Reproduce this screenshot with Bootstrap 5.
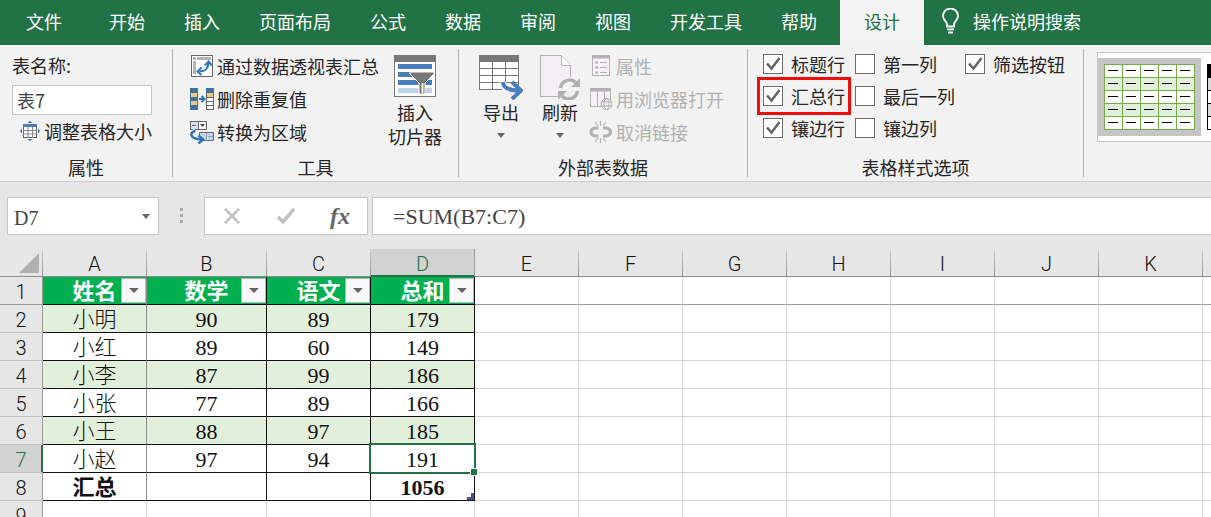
<!DOCTYPE html>
<html lang="zh-CN">
<head>
<meta charset="utf-8">
<meta name="viewport" content="width=device-width, initial-scale=1">
<title>表格工具 - 设计</title>
<link href="https://cdn.jsdelivr.net/npm/bootstrap@5.3.0/dist/css/bootstrap.min.css" rel="stylesheet">
<style>
  :root { --xl-green: #217346; --ink: #262626; --line: #d4d4d4; }
  body { font: 18px/24px "Noto Sans CJK SC", sans-serif; color: var(--ink); background: #e6e6e6; height: 100vh; overflow: hidden; }
  button { font: inherit; color: inherit; background: none; border: 0; padding: 0; }
  svg { flex: none; display: block; }

  .tabs { background: var(--xl-green); height: 45px; }
  .tabs a { color: #fff; text-decoration: none; padding: 0 20px 4px 19px; white-space: nowrap; display: flex; align-items: center; }
  .tabs a.file-tab { padding-left: 26px; padding-right: 28px; }
  .tabs a.on { background: #f3f3f3; color: var(--xl-green); padding-left: 24px; padding-right: 24px; margin-left: 3px; }
  .tabs a.tell { padding-left: 16px; padding-bottom: 3px; gap: 12px; }

  .ribbon { background: #f2f2f2; border-bottom: 1px solid #cfcfcf; padding: 4px 0; }
  .group { flex: none; border-right: 1px solid #b1b1b1; white-space: nowrap; }
  .group-body { height: 108px; }
  .group-name { line-height: 20px; text-align: center; }
  .g-props { width: 173px; }
  .g-tools { width: 286px; }
  .g-ext { width: 289px; }
  .g-opts { width: 336px; }
  .tool-row { height: 33px; display: flex; align-items: center; gap: 3px; }
  .tool-row:disabled { color: #b1b1b1; }
  .big-btn { display: flex; flex-direction: column; align-items: center; line-height: 24px; padding-top: 6px; }
  .g-tools .big-btn svg { margin-bottom: 3px; }
  .tri { border: 4px solid transparent; border-top: 5px solid #666; border-bottom: 0; }
  .big-btn .tri { margin-top: 9px; }
  .name-input { width: 140px; height: 30px; border: 1px solid #c6c6c6; background: #fff; padding: 0 4px; color: #444; }

  .opts { display: grid; grid-template-columns: 92px 110px auto; gap: 6px 0; padding: 2px 0 0 15px; align-content: start; justify-items: start; }
  .opt { display: flex; align-items: center; gap: 8px; height: 26px; }
  .opt input { appearance: none; width: 20px; height: 20px; margin: 0; border: 1px solid #6d6d6d; background: #fff; }
  .opt input:checked { background: #fff url("data:image/svg+xml,%3Csvg xmlns='http://www.w3.org/2000/svg' viewBox='0 0 18 18'%3E%3Cpath d='M3 8.500l4.500 5 8-10.500' fill='none' stroke='%23666' stroke-width='2.600'/%3E%3C/svg%3E"); }
  .opt.marked { outline: 3px solid #f00d0d; outline-offset: 3px; }

  .gallery { margin: 3px 0 0 13px; height: 90px; border: 1px solid #c6c6c6; border-right: 0; background: #fff; overflow: hidden; }
  .style-item { flex: none; margin-top: 5px; height: 78px; width: 103px; }
  .style-item.on { background: #c5c5c5; }

  .fbar { padding: 15px 0 14px; }
  .fbox { background: #fff; border: 1px solid #c6c6c6; height: 38px; }
  .serif { font-family: "Liberation Serif", "Noto Sans CJK SC", serif; font-size: 22px; }
  .name-box { width: 152px; margin-left: 7px; }
  .name-box input { font-size: 20px; width: 110px; color: #444; padding: 3px 0 0 6px; }
  .fbox input { border: 0; background: none; outline: 0; }
  .formula { color: #444; padding: 2px 0 0 20px; }
  .fx-tools { width: 164px; margin-left: 20px; padding: 0 17px; }
  .fx-sign { font: italic bold 24px/30px "Liberation Serif", serif; color: #666; }

  .sheet { width: 100%; table-layout: fixed; border-collapse: separate; border-spacing: 0; background: #fff; font-weight: 300; }
  .sheet th, .sheet td { height: 28px; line-height: 24px; padding: 3px 0 0; text-align: center; border: 0 solid var(--line); border-width: 0 1px 1px 0; position: relative; font-size: 22px; white-space: nowrap; color: #111; }
  .sheet td, .sheet .field { font-family: "Liberation Serif", "Noto Sans CJK SC", serif; }
  .sheet thead th, .sheet .rownum { font-family: Roboto, "Noto Sans CJK SC", sans-serif; font-size: 20px; font-weight: 300; background: #e6e6e6; }
  .sheet thead th { border-color: #999; border-image: linear-gradient(#d0d0d0, #8c8c8c) 1; }
  .sheet .rownum { border-right-color: #999; border-bottom-color: #c4c4c4; }
  .sheet thead .cur { background: #d2d2d2; color: var(--xl-green); border-image: none; border-bottom-color: var(--xl-green); box-shadow: inset 0 -1px var(--xl-green); }
  .sheet .rownum.cur { background: #d2d2d2; color: var(--xl-green); box-shadow: inset -1px 0 var(--xl-green); border-right-color: var(--xl-green); }
  .sheet .frozen > * { border-bottom-color: #999; }
  .sheet .field { background: #00b050; color: #fff; font-weight: 700; }
  .sheet .in { border-color: #111; }
  .sheet .in.first { border-right-color: #8c8c8c; }
  .sheet .band .in { background: #e2efda; }
  .sheet .total .in { font-weight: 700; }
  .drop { position: absolute; right: 0; top: 1px; width: 25px; height: 25px; background: #f8f8fa; border: 1px solid #b5b5c0; display: flex; align-items: center; justify-content: center; }
  .drop .tri { border-width: 5px 5px 0; }
  .picked::after { content: ""; position: absolute; z-index: 2; inset: -2px; border: 2px solid var(--xl-green); }
  .handle { position: absolute; z-index: 3; right: -3px; bottom: -3px; width: 6px; height: 6px; background: var(--xl-green); outline: 1px solid #fff; }
  .resize { position: absolute; right: 0; bottom: 0; }
  .corner { position: absolute; right: 3px; bottom: 3px; }
</style>
</head>
<body>
<nav class="tabs d-flex">
  <a class="file-tab" href="#">文件</a><a href="#">开始</a><a href="#">插入</a><a href="#">页面布局</a><a href="#">公式</a><a href="#">数据</a><a href="#">审阅</a><a href="#">视图</a><a href="#">开发工具</a><a href="#">帮助</a><a class="on" href="#" aria-current="page">设计</a>
  <a class="tell" href="#"><svg width="21" height="26" viewBox="0 0 21 26" fill="none" stroke="#fff" stroke-width="1.800"><path d="M7 18.500v-2.500c0-2-4-4-4-8a7.500 7.500 0 0 1 15 0c0 4-4 6-4 8v2.500z"/><path d="M7 21.300h7M8 24.500h5"/></svg>操作说明搜索</a>
</nav>

<section class="ribbon d-flex overflow-hidden">
  <div class="group g-props">
    <div class="group-body d-flex flex-column align-items-start ps-2">
      <label for="tname" class="ms-1 pt-1 mb-2">表名称:</label>
      <input id="tname" class="name-input ms-1 mb-1" value="表7">
      <button class="d-flex align-items-center ms-2 ps-1" type="button">
        <svg width="20" height="20" viewBox="0 0 20 20" class="me-1"><rect x="3.500" y="3.500" width="13" height="13" fill="#fff" stroke="#666"/><path d="M3 3h14v3H3z" fill="#4a7ebb"/><path d="M8 6v11M12.500 6v11M3 9.500h14M3 13h14" stroke="#888"/><path d="M7.500 2L10 0l2.500 2zM7.500 18l2.500 2 2.500-2zM2 7.500L0 10l2 2.500zM18 7.500l2 2.500-2 2.500z" fill="#2e75b6"/></svg>
        调整表格大小</button>
    </div>
    <div class="group-name">属性</div>
  </div>

  <div class="group g-tools">
    <div class="group-body d-flex justify-content-between ps-3 pe-3">
      <div class="d-flex flex-column align-items-start">
        <button class="tool-row" type="button"><svg width="25" height="24" viewBox="0 0 25 24"><rect x="2.500" y="1.500" width="21" height="21" fill="#fff" stroke="#666"/><path d="M4 3h3v3H4zM8 3h14v3H8zM4 7h3v13H4z" fill="#b3b3b3"/><path d="M10.500 17.500q8.500 0 9-8.500" fill="none" stroke="#2e75b6" stroke-width="2"/><path d="M16 11.500l3.500-4 3.500 4M12.500 13.500l-4 4 4 3.500" fill="none" stroke="#2e75b6" stroke-width="2"/></svg>通过数据透视表汇总</button>
        <button class="tool-row" type="button"><svg width="25" height="24" viewBox="0 0 25 24"><path d="M1 1h8v22H1z" fill="#41719c"/><path d="M2 6h6v4H2zM2 14h6v4H2z" fill="#f0c987"/><path d="M10 12h5M12.500 9l3 3-3 3" fill="none" stroke="#2e75b6" stroke-width="2"/><path d="M17 1h8v22h-8z" fill="#666"/><path d="M17 1h8v5h-8z" fill="#41719c"/><path d="M18 6h6v4h-6z" fill="#f0c987"/><path d="M18 11h6v3h-6zM18 15h6v3h-6zM18 19h6v3h-6z" fill="#fff"/></svg>删除重复值</button>
        <button class="tool-row" type="button"><svg width="25" height="24" viewBox="0 0 25 24"><rect x="1.500" y="1.500" width="16" height="8" fill="#fff" stroke="#666"/><path d="M2 2h7v7H2z" fill="#d5e2f0"/><path d="M9.500 1v9M3 5.500h4" stroke="#666"/><path d="M11 4h5l-2.500 3z" fill="#444"/><path d="M10.500 12.500h14v8h-14z" fill="#c5d6eb" stroke="#666"/><path d="M17.500 13v8M19 16.500h5" stroke="#8aa"/><path d="M6.500 11.500q-5 1-4 4t10 4" fill="none" stroke="#f2f2f2" stroke-width="5"/><path d="M6.500 11q-5 1-4 4.500t11 4" fill="none" stroke="#2e75b6" stroke-width="2.500"/><path d="M9.500 15.500l4.500 4-4.500 4" fill="none" stroke="#2e75b6" stroke-width="2.500"/></svg>转换为区域</button>
      </div>
      <button class="big-btn flex-shrink-0" type="button">
        <svg width="42" height="42" viewBox="0 0 42 42"><rect x=".5" y=".5" width="41" height="41" fill="#fff" stroke="#777"/><path d="M0 0h42v7H0z" fill="#777"/><path d="M4 9h34v5H4zM4 17h34v5H4zM4 25h34v5H4z" fill="#4a7ebb"/><path d="M4 33h34v5H4z" fill="#c0d1ea"/><path d="M16 17h24v2l-9 9V39h-6V28L16 19z" fill="#777" stroke="#fff"/><path d="M28.500 28v10" stroke="#f4f4f4" stroke-width="2"/></svg>
        <span>插入</span><span>切片器</span></button>
    </div>
    <div class="group-name">工具</div>
  </div>

  <div class="group g-ext">
    <div class="group-body d-flex ps-3">
      <button class="big-btn ms-1 me-3" type="button">
        <svg width="44" height="45" viewBox="0 0 44 45"><rect x=".5" y=".5" width="39" height="34" fill="#fff" stroke="#777"/><path d="M0 0h40v7H0z" fill="#777"/><path d="M13.500 7v27M26.500 7v27M0 13.500h40M0 20.500h40M0 27.500h40" stroke="#777"/><path d="M23.500 27q1 9 15 9" fill="none" stroke="#f2f2f2" stroke-width="7"/><path d="M24 27q0 8.500 17 8.500" fill="none" stroke="#4a7ebb" stroke-width="4"/><path d="M33 27l9 8.500-9 8.500" fill="none" stroke="#4a7ebb" stroke-width="4"/></svg>
        <span>导出</span><span class="tri"></span></button>
      <button class="big-btn me-2" type="button">
        <svg width="42" height="45" viewBox="0 0 42 45"><path d="M1.500.5h21l9 10v31h-30z" fill="#f3eff5" stroke="#b1b1b1"/><path d="M22.500.5v10h9" fill="#fff" stroke="#b1b1b1"/><circle cx="30" cy="34" r="12" fill="#f2f2f2"/><path d="M21.500 33a9 9 0 0 1 15.500-5M38.500 36a9 9 0 0 1-15.500 5" fill="none" stroke="#b1b1b1" stroke-width="3.500"/><path d="M41 23v9h-9zM19 45v-9h9z" fill="#b1b1b1"/></svg>
        <span>刷新</span><span class="tri"></span></button>
      <div class="d-flex flex-column align-items-start">
        <button class="tool-row" type="button" disabled><svg width="24" height="24" viewBox="0 0 24 24" stroke="#b1b1b1"><rect x="3.500" y="1.500" width="17" height="20" fill="#f5f1f6"/><path d="M3 3h18" stroke-width="3"/><path d="M11 8.500h7M11 13.500h7M11 18.500h7"/><path d="M6 8.500h3M6 13.500h3M6 18.500h3" stroke-width="2"/></svg>属性</button>
        <button class="tool-row" type="button" disabled><svg width="24" height="24" viewBox="0 0 24 24" fill="none" stroke="#b1b1b1"><rect x="1.500" y="1.500" width="20" height="18" fill="#f5f1f6"/><path d="M1 3h21" stroke-width="3"/><path d="M8.500 4v15M15.500 4v10"/><circle cx="17.500" cy="17" r="5.500" fill="#f2f2f2"/><ellipse cx="17.500" cy="17" rx="2.500" ry="5.500"/><path d="M12 15h11M12 19h11"/></svg>用浏览器打开</button>
        <button class="tool-row" type="button" disabled><svg width="24" height="24" viewBox="0 0 24 24" fill="none" stroke="#b1b1b1"><path d="M9.500 8H6q-4 1-4 4t4 4h3.500M14 8h3.500q4 1 4 4t-4 4H14" stroke-width="3"/><path d="M11.500 1v5M6 2l3 4M17 2l-3 4M11.500 18v5M6 22l3-4M17 22l-3-4" stroke-width="1.200"/></svg>取消链接</button>
      </div>
    </div>
    <div class="group-name">外部表数据</div>
  </div>

  <div class="group g-opts">
    <div class="group-body opts">
      <label class="opt"><input type="checkbox" checked>标题行</label>
      <label class="opt"><input type="checkbox">第一列</label>
      <label class="opt"><input type="checkbox" checked>筛选按钮</label>
      <label class="opt marked"><input type="checkbox" checked>汇总行</label>
      <label class="opt"><input type="checkbox">最后一列</label><span></span>
      <label class="opt"><input type="checkbox" checked>镶边行</label>
      <label class="opt"><input type="checkbox">镶边列</label>
    </div>
    <div class="group-name">表格样式选项</div>
  </div>

  <div class="gallery d-flex flex-grow-1">
    <button class="style-item on" type="button" aria-label="浅绿色表格样式">
      <svg width="103" height="78" viewBox="0 0 103 78"><path d="M6 6h91v66H6z" fill="#fff"/><path d="M6 19h91v13H6zM6 45h91v13H6z" fill="#e2efda"/><path d="M6.500 6v66M24.500 6v66M42.500 6v66M60.500 6v66M78.500 6v66M96.500 6v66M6 6.500h91M6 19.500h91M6 32.500h91M6 45.500h91M6 58.500h91M6 71.500h91" stroke="#70ad47"/><path d="M10 12.500h88M10 25.500h88M10 38.500h88M10 51.500h88M10 64.500h88" stroke="#000" stroke-dasharray="10 8"/></svg></button>
    <button class="style-item" type="button" aria-label="黑色表格样式">
      <svg width="103" height="78" viewBox="0 0 103 78"><path d="M6 6h91v66H6z" fill="#fff"/><path d="M6 6h91v13H6z"/><path d="M6 19h91v13H6zM6 45h91v13H6z" fill="#d9d9d9"/><path d="M6.500 6v66M24.500 6v66M42.500 6v66M60.500 6v66M78.500 6v66M96.500 6v66M6 19.500h91M6 32.500h91M6 45.500h91M6 58.500h91M6 71.500h91" stroke="#000"/></svg></button>
  </div>
</section>

<section class="fbar d-flex align-items-center">
  <div class="fbox name-box d-flex align-items-center justify-content-between pe-2"><input class="serif" aria-label="名称框" value="D7"><span class="tri"></span></div>
  <svg class="ms-3 ps-1" width="9" height="16" viewBox="0 0 5 16"><path d="M1 0h3v3H1zM1 6h3v3H1zM1 12h3v3H1z" fill="#aaa"/></svg>
  <div class="fbox fx-tools d-flex align-items-center justify-content-between">
    <button type="button" aria-label="取消"><svg width="20" height="20" viewBox="0 0 20 20"><path d="M3 3l14 14M17 3L3 17" stroke="#c0c0c0" stroke-width="2.500"/></svg></button>
    <button type="button" aria-label="输入"><svg width="20" height="20" viewBox="0 0 20 20"><path d="M2 11l5 5L18 3" fill="none" stroke="#c0c0c0" stroke-width="3.500"/></svg></button>
    <button type="button" class="fx-sign" aria-label="插入函数">fx</button>
  </div>
  <div class="fbox flex-grow-1 ms-1 border-end-0"><input class="formula serif w-100 h-100" aria-label="编辑栏" value="=SUM(B7:C7)"></div>
</section>

<table class="sheet">
  <colgroup><col style="width:43px"><col style="width:104px"><col style="width:120px"><col style="width:104px"><col style="width:104px"><col style="width:104px"><col style="width:104px"><col style="width:104px"><col style="width:104px"><col style="width:104px"><col style="width:104px"><col style="width:104px"><col></colgroup>
  <thead><tr><th><svg class="corner" width="20" height="20" viewBox="0 0 20 20"><path d="M20 0v20H0z" fill="#b1b1b1"/></svg></th><th>A</th><th>B</th><th>C</th><th class="cur">D</th><th>E</th><th>F</th><th>G</th><th>H</th><th>I</th><th>J</th><th>K</th><th class="border-end-0"></th></tr></thead>
  <tbody id="rows"></tbody>
</table>

<script>
  const data = [
    ['姓名', '数学', '语文', '总和'],
    ['小明', 90, 89, 179], ['小红', 89, 60, 149], ['小李', 87, 99, 186],
    ['小张', 77, 89, 166], ['小王', 88, 97, 185], ['小赵', 97, 94, 191],
    ['汇总', '', '', 1056], null
  ];
  const blank = '<td></td>'.repeat(7) + '<td class="border-end-0"></td>';
  document.getElementById('rows').innerHTML = data.map((row, i) => {
    const n = i + 1;
    const kind = n === 1 ? 'frozen' : n === 8 ? 'total' : n < 8 && n % 2 === 0 ? 'band' : '';
    const cells = row ? row.map((v, c) => {
      const first = c === 0 ? ' first' : '';
      if (n === 1) return `<th class="field in${first}">${v}<button class="drop" type="button" aria-label="筛选${v}"><span class="tri"></span></button></th>`;
      if (n === 7 && c === 3) return `<td class="in picked">${v}<span class="handle"></span></td>`;
      if (n === 8 && c === 3) return `<td class="in">${v}<svg class="resize" width="7" height="7" viewBox="0 0 7 7"><path d="M4 0h3v7H0V4h4z" fill="#4a5596"/></svg></td>`;
      return `<td class="in${first}">${v}</td>`;
    }).join('') : '<td></td>'.repeat(4);
    return `<tr class="${kind}"><th class="rownum${n === 7 ? ' cur' : ''}">${n}</th>${cells}${blank}</tr>`;
  }).join('');
</script>
<script src="https://cdn.jsdelivr.net/npm/bootstrap@5.3.0/dist/js/bootstrap.bundle.min.js"></script>
</body>
</html>
